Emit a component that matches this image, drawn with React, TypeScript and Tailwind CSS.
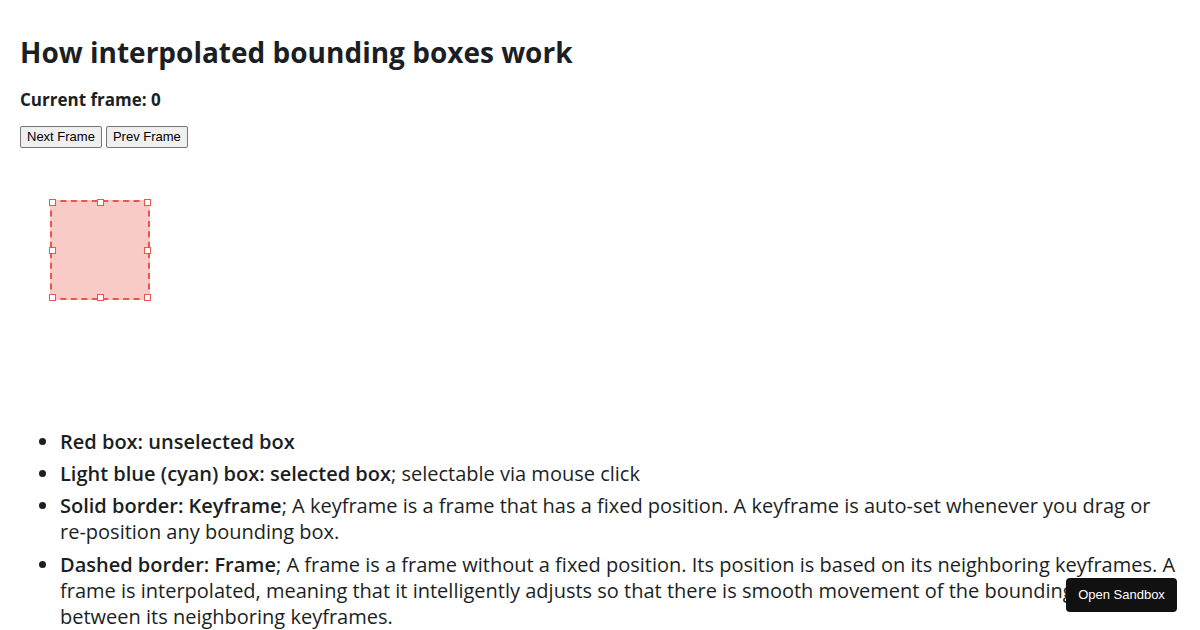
import React, { useState } from "react";

const handles = [
  "left-[-1px] top-[-1px]",
  "left-[47px] top-[-1px]",
  "left-[94px] top-[-1px]",
  "left-[-1px] top-[47px]",
  "left-[94px] top-[47px]",
  "left-[-1px] top-[94px]",
  "left-[47px] top-[94px]",
  "left-[94px] top-[94px]",
];

export default function App() {
  const [frame, setFrame] = useState(0);

  return (
    <div className="relative min-h-[630px] bg-white px-5 text-[#1b1f24] [font-family:'Open_Sans',sans-serif]">
      <h1 className="pt-[33px] text-[28px] font-bold leading-[38px]">
        How interpolated bounding boxes work
      </h1>
      <h4 className="mt-[17px] text-[17px] font-bold leading-[24px]">
        Current frame: {frame}
      </h4>
      <div className="mt-[14px] flex gap-1 [font-family:'Liberation_Sans',sans-serif]">
        <button
          onClick={() => setFrame((f) => f + 1)}
          className="h-[22px] rounded-[2px] border border-[#767676] bg-[#efefef] px-[6px] text-[13px] text-black"
        >
          Next Frame
        </button>
        <button
          onClick={() => setFrame((f) => Math.max(0, f - 1))}
          className="h-[22px] rounded-[2px] border border-[#767676] bg-[#efefef] px-[6px] text-[13px] text-black"
        >
          Prev Frame
        </button>
      </div>

      <div className="relative h-[281px]">
        <div className="absolute left-[30px] top-[52px] h-[100px] w-[100px] border-2 border-dashed border-[#ef5350] bg-[#f8cbc7]">
          {handles.map((h) => (
            <span
              key={h}
              className={`absolute h-[7px] w-[7px] -translate-x-[2px] -translate-y-[2px] border border-[#ef5350] bg-white ${h}`}
            />
          ))}
        </div>
      </div>

      <ul className="list-disc pl-10 text-[20px] leading-[26px]">
        <li className="mb-[6px]">
          <b className="font-semibold">Red box: unselected box</b>
        </li>
        <li className="mb-[6px]">
          <b className="font-semibold">Light blue (cyan) box: selected box</b>; selectable via mouse click
        </li>
        <li className="mb-[7px]">
          <b className="font-semibold">Solid border: Keyframe</b>; A keyframe is a frame that has a fixed position. A keyframe is
          auto-set whenever you drag or re-position any bounding box.
        </li>
        <li className="mb-[6px]">
          <b className="font-semibold">Dashed border: Frame</b>; A frame is a frame without a fixed position. Its position is based
          on its neighboring keyframes. A frame is interpolated, meaning that it intelligently adjusts so that there is
          smooth movement of the bounding box between its neighboring keyframes.
        </li>
      </ul>

      <button className="absolute left-[1066px] top-[578px] h-[34px] w-[111px] rounded-[4px] bg-[#111111] text-[13px] text-white [font-family:'Liberation_Sans',sans-serif]">
        Open Sandbox
      </button>
    </div>
  );
}
